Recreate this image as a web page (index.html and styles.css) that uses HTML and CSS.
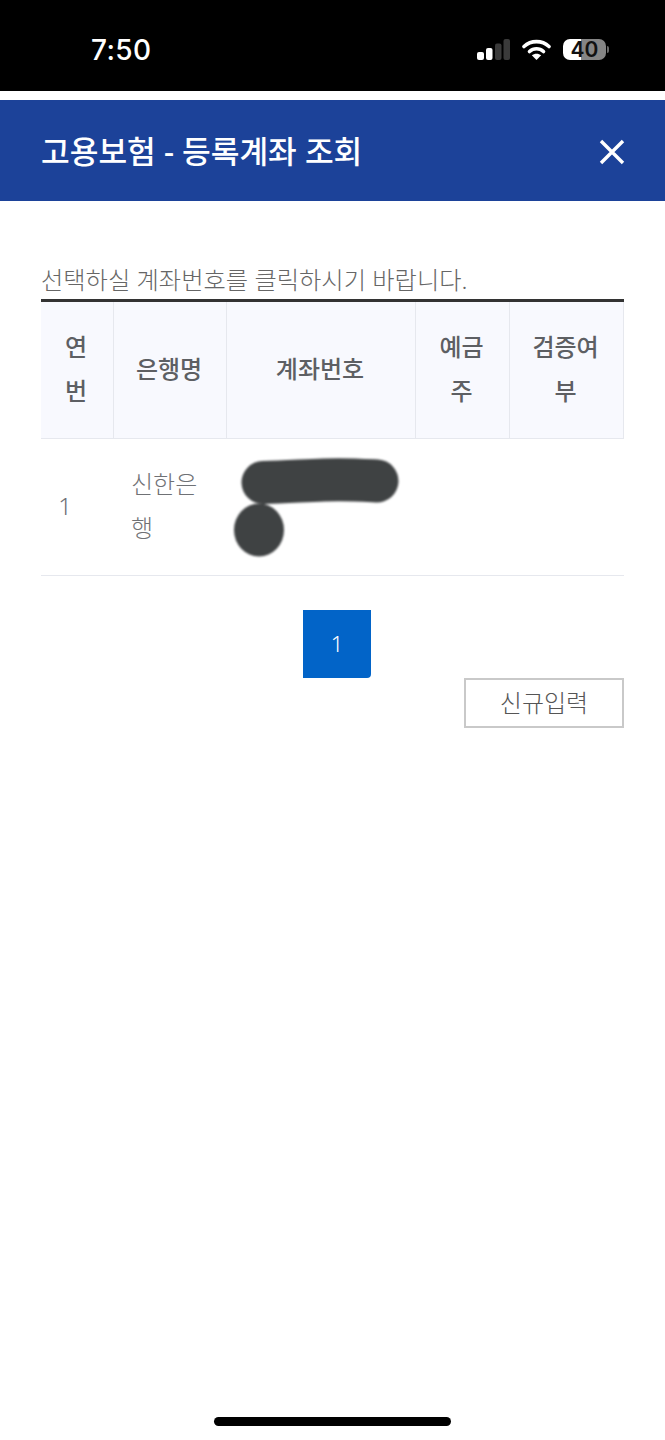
FILE: index.html
```html
<!DOCTYPE html>
<html lang="ko">
<head>
    <meta charset="UTF-8">
    <meta name="viewport" content="width=device-width, initial-scale=1.0">
    <title>고용보험 - 등록계좌 조회</title>
    <link rel="stylesheet" href="styles.css">
</head>
<body>
    <div class="status-bar">
        <span class="status-time">7:50</span>
        <div class="status-icons">
            <svg class="signal-icon" width="33" height="21" viewBox="0 0 33 21">
                <rect x="0" y="13" width="7" height="8" rx="2" fill="#fff"/>
                <rect x="9" y="9" width="6.500" height="12" rx="2" fill="#fff"/>
                <rect x="18" y="4.500" width="6.500" height="16.500" rx="2" fill="#3a3a3a"/>
                <rect x="26.500" y="0" width="6.500" height="21" rx="2" fill="#3a3a3a"/>
            </svg>
            <svg class="wifi-icon" width="29" height="21" viewBox="0 0 29 21">
                <path d="M2 7.500 C9 1 20 1 27 7.500" fill="none" stroke="#fff" stroke-width="3.600" stroke-linecap="round"/>
                <path d="M7.500 12.500 C11.500 8.800 17.500 8.800 21.500 12.500" fill="none" stroke="#fff" stroke-width="3.600" stroke-linecap="round"/>
                <path d="M14.500 21 L9.800 16.300 C12.400 14.100 16.600 14.100 19.200 16.300 Z" fill="#fff"/>
            </svg>
            <div class="battery">
                <div class="battery-body"><span>40</span></div>
                <div class="battery-tip"></div>
            </div>
        </div>
    </div>

    <div class="modal-header">
        <h1>고용보험 - 등록계좌 조회</h1>
        <svg class="close-icon" width="26" height="26" viewBox="0 0 26 26">
            <path d="M2 2 L24 24 M24 2 L2 24" stroke="#fff" stroke-width="3.400" fill="none"/>
        </svg>
    </div>

    <div class="content">
        <p class="guide">선택하실 계좌번호를 클릭하시기 바랍니다.</p>

        <table class="account-table">
            <colgroup>
                <col class="col-no">
                <col class="col-bank">
                <col class="col-account">
                <col class="col-owner">
                <col class="col-check">
            </colgroup>
            <thead>
                <tr>
                    <th>연번</th>
                    <th>은행명</th>
                    <th>계좌번호</th>
                    <th>예금주</th>
                    <th>검증여부</th>
                </tr>
            </thead>
            <tbody>
                <tr>
                    <td class="cell-no">1</td>
                    <td>신한은행</td>
                    <td class="cell-account">
                        <svg class="scribble" width="175" height="104" viewBox="0 0 175 104">
                            <path d="M29 27.500 C50 27 65 26 90 25 C110 24 125 25 143 26" fill="none" stroke="#3f4243" stroke-width="43" stroke-linecap="round"/>
                            <ellipse cx="25" cy="75" rx="25" ry="26.500" fill="#3f4243"/>
                        </svg>
                    </td>
                    <td></td>
                    <td></td>
                </tr>
            </tbody>
        </table>

        <div class="pagination">
            <a class="page-num">1</a>
        </div>

        <div class="button-row">
            <button type="button" class="new-btn">신규입력</button>
        </div>
    </div>

    <div class="home-indicator"></div>
</body>
</html>
```

FILE: styles.css
```css
html, body {
    margin: 0;
    padding: 0;
}

body {
    position: relative;
    width: 665px;
    height: 1440px;
    overflow: hidden;
    background-color: #fff;
    font-family: "Noto Sans", "Noto Sans CJK KR", sans-serif;
}

.status-bar {
    display: flex;
    align-items: center;
    justify-content: space-between;
    box-sizing: border-box;
    height: 91px;
    padding: 8px 56px 0 91px;
    background-color: #000;
    color: #fff;
}

.status-time {
    font-family: Inter, "Liberation Sans", sans-serif;
    font-size: 28px;
    font-weight: 500;
    letter-spacing: 0.4px;
}

.status-icons {
    display: flex;
    align-items: center;
    gap: 12px;
}

.battery {
    display: flex;
    align-items: center;
    gap: 1px;
}

.battery-body {
    width: 43px;
    height: 21px;
    border-radius: 7px;
    background: linear-gradient(to right, #fff 0, #fff 42%, #858585 42%, #858585 100%);
    color: #111;
    font-family: Inter, "Liberation Sans", sans-serif;
    font-size: 21px;
    font-weight: 600;
    line-height: 21px;
    text-align: center;
}

.battery-tip {
    width: 2px;
    height: 7px;
    border-radius: 0 2px 2px 0;
    background-color: #6a6a6a;
}

.modal-header {
    display: flex;
    align-items: center;
    justify-content: space-between;
    box-sizing: border-box;
    height: 101px;
    margin-top: 9px;
    padding: 0 40px 0 41px;
    background-color: #1c4299;
}

.modal-header h1 {
    margin: 0 0 2px;
    color: #fff;
    font-size: 31.200px;
    font-weight: 500;
}

.close-icon {
    margin-top: 2px;
}

.content {
    padding: 0 41px;
}

.guide {
    margin: 0;
    padding: 61px 0 1px;
    color: #666;
    font-size: 24.250px;
    font-weight: 300;
    line-height: 36px;
}

.account-table {
    width: 583px;
    border-collapse: separate;
    border-spacing: 0;
    table-layout: fixed;
    border-top: 3px solid #333;
}

.col-no { width: 73px; }
.col-bank { width: 113px; }
.col-account { width: 189px; }
.col-owner { width: 94px; }
.col-check { width: 114px; }

.account-table th {
    height: 137px;
    box-sizing: border-box;
    padding: 0 19px 2px 17px;
    background-color: #f8f9fe;
    border-right: 1px solid #e6e8ee;
    border-bottom: 1px solid #e6e8ee;
    color: #5d5f63;
    font-size: 24px;
    font-weight: 500;
    line-height: 44px;
    text-align: center;
    word-break: break-all;
}

.account-table td {
    height: 137px;
    box-sizing: border-box;
    padding: 0 18px 2px 17px;
    border-bottom: 1px solid #e6e8ee;
    color: #6f7175;
    font-size: 24px;
    font-weight: 300;
    line-height: 44px;
    word-break: break-all;
}

.account-table td.cell-no {
    text-align: center;
    padding: 0 25px 2px 0;
}

.account-table td.cell-account {
    padding: 0 0 0 7px;
    line-height: 0;
}

.scribble {
    filter: blur(1.200px);
}

.pagination {
    display: flex;
    justify-content: center;
    padding-top: 34px;
    margin-left: 9px;
}

.page-num {
    display: block;
    width: 68px;
    height: 68px;
    border-radius: 0 0 4px 0;
    background-color: #0264c8;
    color: #fff;
    font-size: 22px;
    font-weight: 300;
    line-height: 66px;
    text-align: center;
}

.button-row {
    display: flex;
    justify-content: flex-end;
}

.new-btn {
    width: 160px;
    height: 50px;
    padding: 0 0 4px;
    border: 2px solid #c9c9c9;
    border-radius: 0;
    background-color: #fff;
    color: #555;
    font-family: inherit;
    font-size: 24px;
    font-weight: 300;
}

.home-indicator {
    position: absolute;
    left: 214px;
    top: 1417px;
    width: 237px;
    height: 9px;
    border-radius: 5px;
    background-color: #000;
}
```
